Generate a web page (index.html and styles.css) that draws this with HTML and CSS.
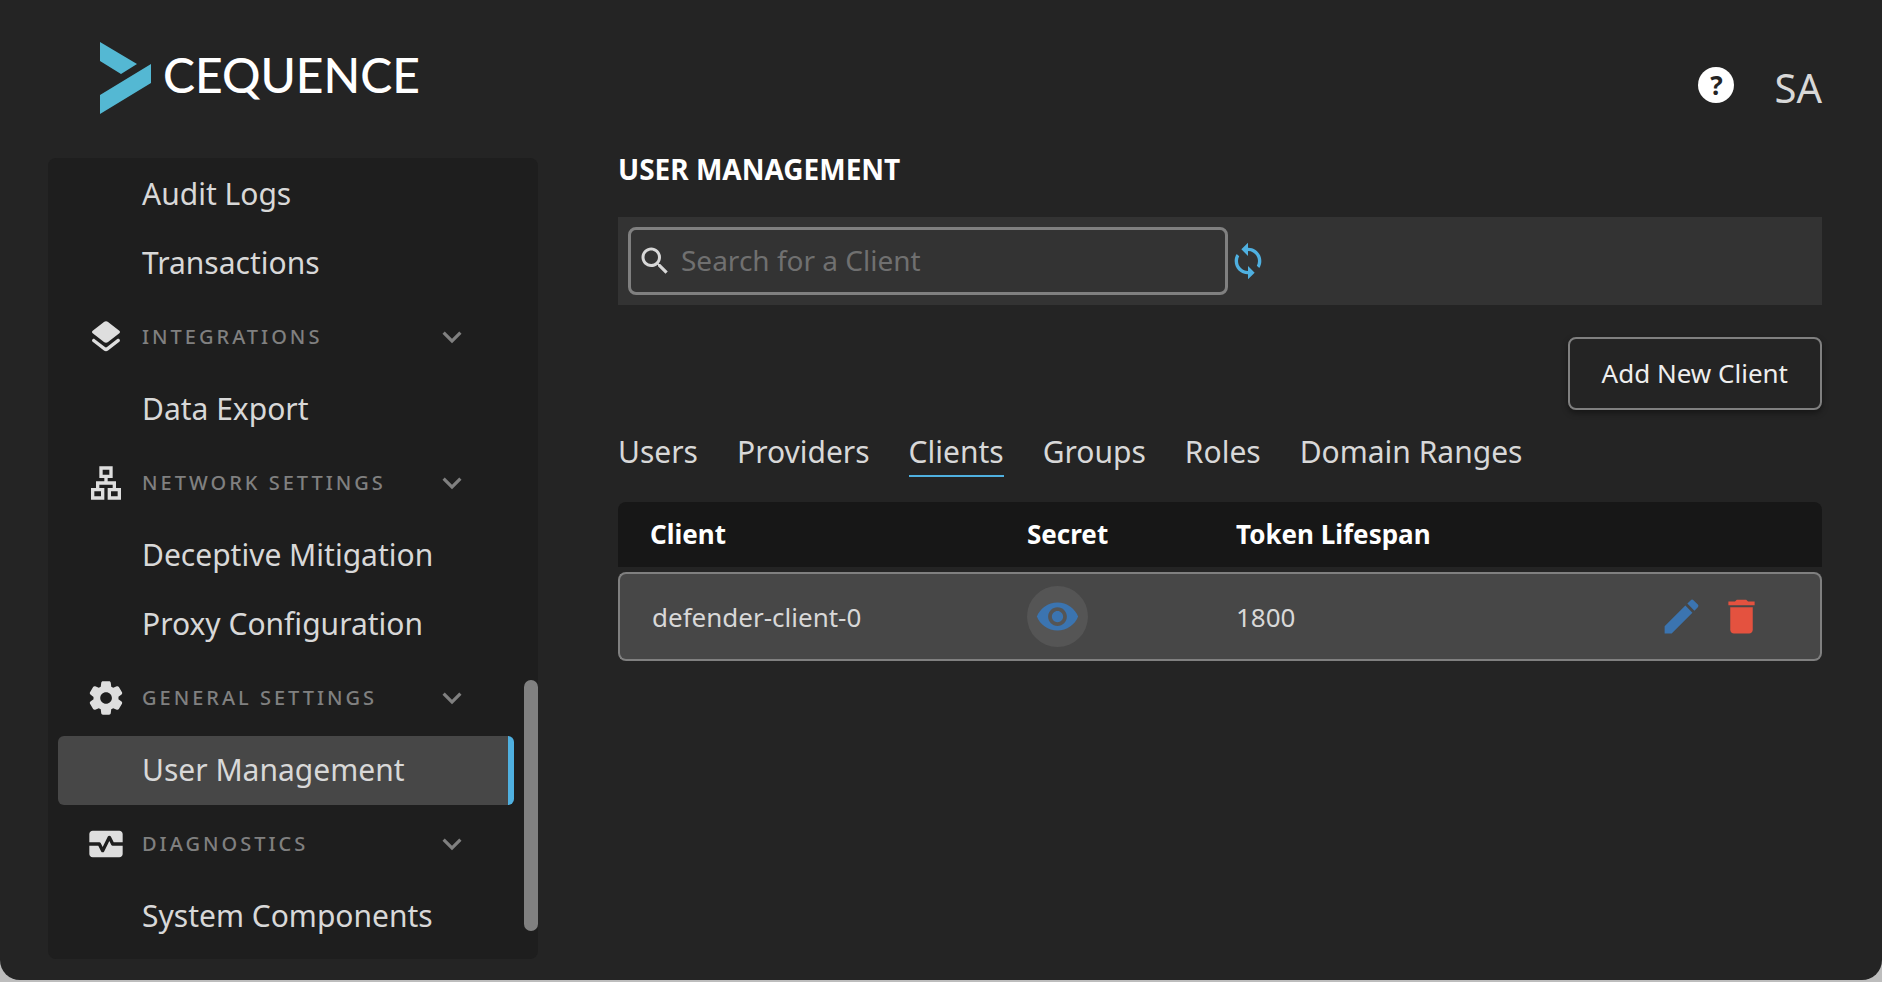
FILE: index.html
```html
<!DOCTYPE html>
<html lang="en">
<head>
    <meta charset="UTF-8">
    <meta name="viewport" content="width=device-width, initial-scale=1.0">
    <title>User Management</title>
    <link rel="stylesheet" href="styles.css">
</head>
<body>
    <div class="app">
        <header class="header">
            <a href="#" class="logo">
                <svg class="logo-mark" viewBox="0 0 51 72" aria-hidden="true">
                    <path d="M0 0l37 22-16 10L0 19zM51 22v19L0 72V53z"/>
                </svg>
                <span class="logo-text">CEQUENCE</span>
            </a>
            <div class="header-actions">
                <button class="help-btn" title="Help">?</button>
                <button class="account-btn" title="Account">SA</button>
            </div>
        </header>

        <div class="layout">
            <aside class="sidebar">
                <nav>
                    <a href="#" class="nav-item">Audit Logs</a>
                    <a href="#" class="nav-item">Transactions</a>

                    <button class="nav-section">
                        <svg class="section-icon" viewBox="0 0 24 24"><path d="M12.6 18.06c-.36.28-.87.28-1.23 0l-6.15-4.78c-.36-.28-.86-.28-1.22 0-.51.4-.51 1.17 0 1.57l6.76 5.26c.72.56 1.73.56 2.46 0l6.76-5.26c.51-.4.51-1.17 0-1.57l-.01-.01c-.36-.28-.86-.28-1.22 0l-6.15 4.79zm.63-3.02l6.76-5.26c.51-.4.51-1.18 0-1.58l-6.76-5.26c-.72-.56-1.73-.56-2.46 0L4.01 8.21c-.51.4-.51 1.18 0 1.58l6.76 5.26c.72.56 1.74.56 2.46-.01z"/></svg>
                        <span class="section-name">INTEGRATIONS</span>
                        <svg class="chevron" viewBox="0 0 24 24"><path d="M16.59 8.59L12 13.17 7.41 8.59 6 10l6 6 6-6z"/></svg>
                    </button>
                    <a href="#" class="nav-item">Data Export</a>

                    <button class="nav-section">
                        <svg class="section-icon" viewBox="0 0 24 24"><path d="M13 22h8v-7h-3v-4h-5V9h3V2H8v7h3v2H6v4H3v7h8v-7H8v-2h8v2h-3v7zM10 7V4h4v3h-4zM9 17v3H5v-3h4zm10 0v3h-4v-3h4z"/></svg>
                        <span class="section-name">NETWORK SETTINGS</span>
                        <svg class="chevron" viewBox="0 0 24 24"><path d="M16.59 8.59L12 13.17 7.41 8.59 6 10l6 6 6-6z"/></svg>
                    </button>
                    <a href="#" class="nav-item">Deceptive Mitigation</a>
                    <a href="#" class="nav-item">Proxy Configuration</a>

                    <button class="nav-section">
                        <svg class="section-icon" viewBox="0 0 24 24"><path d="M19.5 12c0-.23-.01-.45-.03-.68l1.86-1.41c.4-.3.51-.86.26-1.3l-1.87-3.23c-.25-.44-.79-.62-1.25-.42l-2.15.91c-.37-.26-.76-.49-1.17-.68l-.29-2.31c-.06-.5-.49-.88-.99-.88h-3.73c-.51 0-.94.38-1 .88l-.29 2.31c-.41.19-.8.42-1.17.68l-2.15-.91c-.46-.2-1-.02-1.25.42L2.410 8.62c-.25.44-.14.99.26 1.300l1.86 1.410c-.02.22-.03.44-.03.67s.01.45.03.68l-1.860 1.410c-.4.3-.51.86-.26 1.300l1.870 3.230c.25.44.79.62 1.250.42l2.150-.91c.37.26.76.49 1.170.68l.29 2.310c.06.5.49.88.99.88h3.730c.5 0 .93-.38.99-.88l.29-2.310c.41-.19.8-.42 1.170-.68l2.150.91c.46.2 1 .02 1.250-.42l1.870-3.230c.25-.44.14-.99-.26-1.300l-1.860-1.410c.03-.23.04-.45.04-.68zm-7.460 3.500c-1.930 0-3.500-1.570-3.500-3.500s1.570-3.500 3.500-3.500 3.500 1.570 3.500 3.500-1.570 3.500-3.500 3.500z"/></svg>
                        <span class="section-name">GENERAL SETTINGS</span>
                        <svg class="chevron" viewBox="0 0 24 24"><path d="M16.59 8.59L12 13.17 7.41 8.59 6 10l6 6 6-6z"/></svg>
                    </button>
                    <a href="#" class="nav-item active">User Management</a>

                    <button class="nav-section">
                        <svg class="section-icon" viewBox="0 0 24 24"><path d="M15.11 12.45L14 10.24l-3.11 6.21c-.16.34-.51.55-.89.55s-.73-.21-.89-.55L7.38 13H2v5c0 1.1.9 2 2 2h16c1.1 0 2-.9 2-2v-5h-6c-.38 0-.73-.21-.89-.55zM20 4H4c-1.1 0-2 .9-2 2v5h6c.38 0 .73.21.89.55L10 13.76l3.11-6.21c.34-.68 1.45-.68 1.79 0L16.62 11H22V6c0-1.1-.9-2-2-2z"/></svg>
                        <span class="section-name">DIAGNOSTICS</span>
                        <svg class="chevron" viewBox="0 0 24 24"><path d="M16.59 8.59L12 13.17 7.41 8.59 6 10l6 6 6-6z"/></svg>
                    </button>
                    <a href="#" class="nav-item">System Components</a>
                </nav>
                <div class="scroll-thumb"></div>
            </aside>

            <main class="content">
                <h1>USER MANAGEMENT</h1>

                <div class="toolbar">
                    <label class="search">
                        <svg class="search-icon" viewBox="0 0 24 24"><path d="M15.5 14h-.79l-.28-.27C15.41 12.59 16 11.11 16 9.5 16 5.91 13.09 3 9.5 3S3 5.91 3 9.5 5.91 16 9.5 16c1.61 0 3.09-.59 4.23-1.57l.27.28v.79l5 4.99L20.49 19l-4.99-5zm-6 0C7.01 14 5 11.99 5 9.5S7.01 5 9.5 5 14 7.01 14 9.5 11.99 14 9.5 14z"/></svg>
                        <input type="text" placeholder="Search for a Client" aria-label="Search for a Client">
                    </label>
                    <button class="refresh-btn" title="Refresh">
                        <svg viewBox="0 0 24 24"><path d="M12 4V1L8 5l4 4V6c3.31 0 6 2.69 6 6 0 1.01-.25 1.97-.7 2.8l1.46 1.46C19.54 15.03 20 13.57 20 12c0-4.42-3.58-8-8-8zm0 14c-3.31 0-6-2.69-6-6 0-1.01.25-1.97.7-2.8L5.24 7.74C4.46 8.97 4 10.43 4 12c0 4.42 3.58 8 8 8v3l4-4-4-4v3z"/></svg>
                    </button>
                </div>

                <div class="page-actions">
                    <button class="add-btn">Add New Client</button>
                </div>

                <nav class="tabs">
                    <a href="#">Users</a>
                    <a href="#">Providers</a>
                    <a href="#" class="active">Clients</a>
                    <a href="#">Groups</a>
                    <a href="#">Roles</a>
                    <a href="#">Domain Ranges</a>
                </nav>

                <table class="clients">
                    <thead>
                        <tr>
                            <th class="col-client">Client</th>
                            <th class="col-secret">Secret</th>
                            <th class="col-token">Token Lifespan</th>
                            <th></th>
                        </tr>
                    </thead>
                    <tbody>
                        <tr>
                            <td>defender-client-0</td>
                            <td>
                                <button class="secret-btn" title="Show secret">
                                    <svg viewBox="0 0 24 24"><path d="M12 4.5C7 4.5 2.73 7.61 1 12c1.73 4.39 6 7.5 11 7.5s9.27-3.11 11-7.5c-1.73-4.39-6-7.5-11-7.5zM12 17c-2.76 0-5-2.24-5-5s2.24-5 5-5 5 2.24 5 5-2.24 5-5 5zm0-8c-1.66 0-3 1.34-3 3s1.34 3 3 3 3-1.34 3-3-1.34-3-3-3z"/></svg>
                                </button>
                            </td>
                            <td>1800</td>
                            <td>
                                <div class="row-actions">
                                    <button class="edit-btn" title="Edit">
                                        <svg viewBox="0 0 24 24"><path d="M3 17.25V21h3.75L17.81 9.94l-3.75-3.75L3 17.25zM20.71 7.04c.39-.39.39-1.02 0-1.41l-2.34-2.34c-.39-.39-1.02-.39-1.41 0l-1.83 1.83 3.75 3.75 1.83-1.83z"/></svg>
                                    </button>
                                    <button class="delete-btn" title="Delete">
                                        <svg viewBox="0 0 24 24"><path d="M6 19c0 1.1.9 2 2 2h8c1.1 0 2-.9 2-2V7H6v12zM19 4h-3.5l-1-1h-5l-1 1H5v2h14V4z"/></svg>
                                    </button>
                                </div>
                            </td>
                        </tr>
                    </tbody>
                </table>
            </main>
        </div>
    </div>
</body>
</html>
```

FILE: styles.css
```css
* {
    box-sizing: border-box;
}

body {
    margin: 0;
    background: #bdbdbd;
    color: #d8d8d8;
    font-family: "Noto Sans", sans-serif;
    font-size: 26px;
}

a {
    color: inherit;
    text-decoration: none;
}

button {
    padding: 0;
    border: none;
    background: none;
    color: inherit;
    font: inherit;
    cursor: pointer;
}

svg {
    display: block;
    fill: currentColor;
}

.app {
    min-height: calc(100vh - 2px);
    padding: 42px 60px 20px 48px;
    background: #242424;
    border-radius: 0 0 20px 20px;
}

/* Header */
.header {
    display: flex;
    justify-content: space-between;
    align-items: flex-start;
    height: 116px;
    padding-left: 52px;
}

.logo {
    display: flex;
    gap: 12px;
}

.logo-mark {
    width: 51px;
    height: 72px;
    color: #54b8d3;
}

.logo-text {
    color: #fff;
    font-family: Lato, sans-serif;
    font-size: 48px;
    font-weight: 500;
    line-height: 66px;
}

.header-actions {
    display: flex;
    align-items: flex-start;
    gap: 40px;
    padding-top: 25px;
}

.help-btn {
    width: 36px;
    height: 36px;
    border-radius: 50%;
    background: #fff;
    color: #242424;
    font-weight: 700;
    line-height: 36px;
}

.account-btn {
    font-size: 40px;
    line-height: 42px;
}

/* Sidebar */
.layout {
    display: grid;
    grid-template-columns: 490px 1fr;
    align-items: start;
    gap: 80px;
}

.sidebar {
    position: relative;
    padding: 2px 24px 8px 10px;
    background: #1e1e1e;
    border-radius: 8px;
}

.nav-item {
    display: block;
    height: 69px;
    padding-left: 84px;
    border-right: 6px solid transparent;
    border-radius: 6px;
    font-size: 30px;
    line-height: 68px;
}

.nav-item.active {
    background: #474747;
    border-right-color: #4fb0e0;
}

.nav-section {
    display: flex;
    align-items: center;
    width: 100%;
    height: 77px;
    padding: 0 43px 0 28px;
    color: #808080;
    text-align: left;
}

.section-icon {
    width: 40px;
    height: 40px;
    margin-right: 16px;
    color: #dedede;
}

.section-name {
    flex: 1;
    font-size: 20px;
    font-weight: 500;
    letter-spacing: 3px;
}

.chevron {
    width: 38px;
    height: 38px;
}

.scroll-thumb {
    position: absolute;
    right: 0;
    bottom: 28px;
    width: 14px;
    height: 251px;
    border-radius: 7px;
    background: #808080;
}

/* Content */
h1 {
    margin: 0 0 37px;
    color: #fff;
    font-size: 28px;
    font-weight: 700;
    line-height: 22px;
}

.toolbar {
    display: flex;
    align-items: center;
    padding: 10px;
    background: #333;
}

.search {
    display: flex;
    align-items: center;
    gap: 8px;
    width: 600px;
    height: 68px;
    padding: 0 6px;
    border: 3px solid #808080;
    border-radius: 8px;
}

.search-icon {
    width: 36px;
    height: 36px;
}

.search input {
    flex: 1;
    min-width: 0;
    padding: 0 0 2px;
    border: none;
    outline: none;
    background: none;
    color: inherit;
    font: inherit;
    font-size: 28px;
}

.search input::placeholder {
    color: #707070;
}

.refresh-btn {
    color: #4fb0e0;
}

.refresh-btn svg {
    width: 40px;
    height: 40px;
}

.page-actions {
    display: flex;
    justify-content: flex-end;
    margin-top: 32px;
}

.add-btn {
    height: 73px;
    padding: 0 32px 2px;
    border: 2px solid #808080;
    border-radius: 8px;
    color: #eee;
    box-shadow: 0 3px 6px rgba(0, 0, 0, 0.4);
}

.tabs {
    display: flex;
    gap: 39px;
    margin-top: 22px;
    font-size: 30px;
    line-height: 40px;
}

.tabs a {
    padding-bottom: 3px;
    border-bottom: 2px solid transparent;
}

.tabs a.active {
    border-bottom-color: #4fb0e0;
}

.clients {
    width: 100%;
    margin-top: 20px;
    border-collapse: separate;
    border-spacing: 0 5px;
    table-layout: fixed;
}

.col-client {
    width: 409px;
}

.col-secret {
    width: 209px;
}

.col-token {
    width: 300px;
}

.clients th {
    height: 65px;
    padding: 0 0 2px;
    background: #171717;
    color: #fff;
    font-weight: 700;
    text-align: left;
}

.clients th:first-child {
    padding-left: 32px;
    border-top-left-radius: 8px;
}

.clients th:last-child {
    border-top-right-radius: 8px;
}

.clients td {
    height: 89px;
    padding: 0;
    border: solid #808080;
    border-width: 2px 0;
    background: #474747;
}

.clients td:first-child {
    padding-left: 32px;
    border-left-width: 2px;
    border-radius: 8px 0 0 8px;
}

.clients td:last-child {
    border-right-width: 2px;
    border-radius: 0 8px 8px 0;
}

.secret-btn {
    display: block;
    padding: 8px;
    border-radius: 50%;
    background: #555;
    color: #3b74b0;
}

.secret-btn svg {
    width: 45px;
    height: 45px;
}

.row-actions {
    display: flex;
    justify-content: flex-end;
    gap: 15px;
    padding-right: 56px;
}

.row-actions svg {
    width: 45px;
    height: 45px;
}

.edit-btn {
    color: #3b74b0;
}

.delete-btn {
    color: #e4523f;
}
```
